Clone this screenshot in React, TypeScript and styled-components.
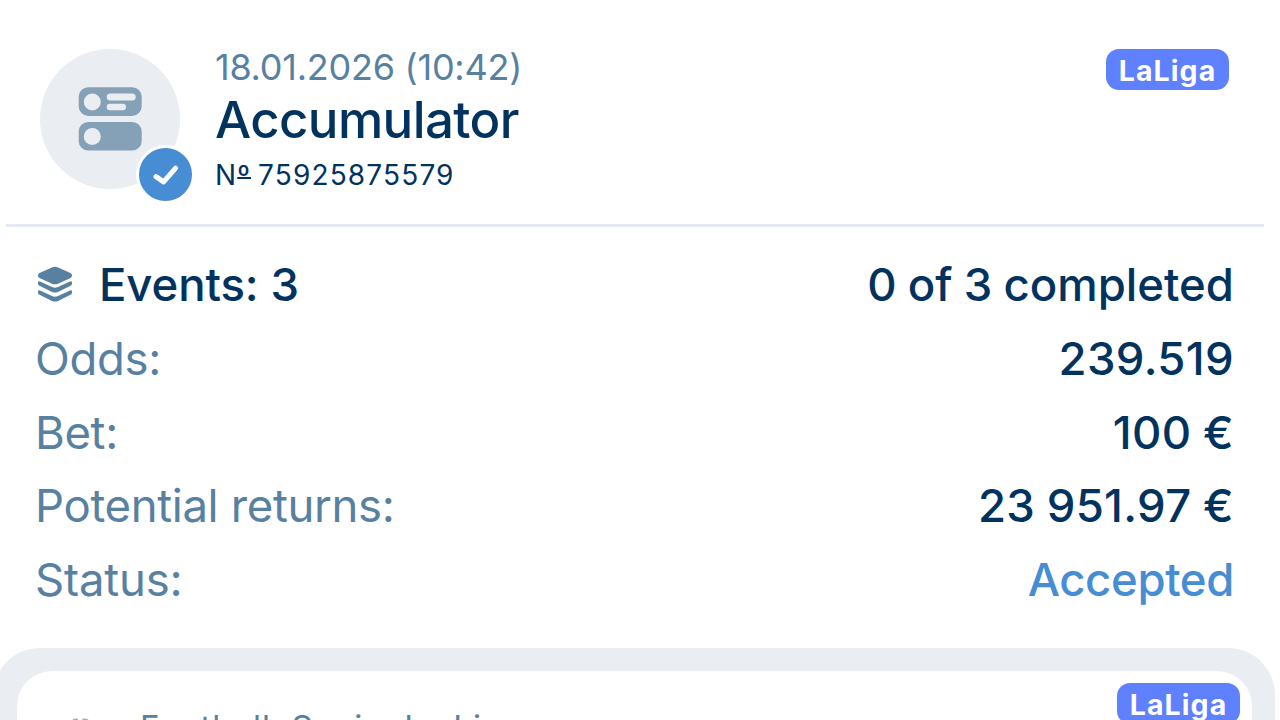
import React, { ReactElement, ReactNode } from 'react'
import styled, { createGlobalStyle } from 'styled-components'

const color = {
  navy: '#02335e',
  steel: '#5881a1',
  icon: '#84a1b8',
  blue: '#478dd3',
  brand: '#5f80ff',
  grey: '#eaedf2',
  line: '#e5e9f1',
  white: '#ffffff',
}

const GlobalStyle = createGlobalStyle`
  * {
    box-sizing: border-box;
  }

  body {
    margin: 0;
    height: 720px;
    overflow: hidden;
    background: ${color.white};
    font-family: Inter, 'Liberation Sans', sans-serif;
  }
`

const Page = styled.main`
  display: flex;
  flex-direction: column;
  width: 1280px;
  height: 720px;
  overflow: hidden;
`

const Header = styled.header`
  display: flex;
  flex: none;
  align-items: flex-start;
  height: 227px;
  margin: 0 16px 0 6px;
  padding: 49px 35px 0 34px;
  border-bottom: 3px solid ${color.line};
`

const Avatar = styled.div`
  position: relative;
  display: flex;
  align-items: center;
  justify-content: center;
  width: 140px;
  height: 140px;
  border-radius: 50%;
  background: ${color.grey};
`

const AcceptedMark = styled.div`
  position: absolute;
  right: -15px;
  bottom: -15px;
  display: flex;
  width: 59px;
  height: 59px;
  border: 3px solid ${color.white};
  border-radius: 50%;
  background: ${color.blue};
`

const Summary = styled.div`
  display: flex;
  flex: 1;
  flex-direction: column;
  padding-left: 35px;
  white-space: nowrap;
`

const DateLine = styled.span`
  color: ${color.steel};
  font-size: 36px;
  line-height: 37px;
  letter-spacing: -0.25px;
`

const Title = styled.h1`
  margin: 0;
  color: ${color.navy};
  font-size: 51px;
  font-weight: 500;
  line-height: 68px;
  letter-spacing: -0.6px;
`

const Serial = styled.span`
  color: ${color.navy};
  font-size: 28px;
  line-height: 43px;
  letter-spacing: 1.15px;
  word-spacing: -2px;
`

const Ordinal = styled.span`
  text-decoration: underline;
  text-decoration-thickness: 2px;
  text-underline-offset: -8px;
  text-decoration-skip-ink: none;
`

const Badge = styled.span`
  display: flex;
  align-items: center;
  justify-content: center;
  width: 123px;
  height: 41px;
  padding: 2px 0 0;
  border-radius: 13px;
  background: ${color.brand};
  color: ${color.white};
  font-size: 28.5px;
  font-weight: 700;
  line-height: 38px;
  letter-spacing: 1.1px;
`

const Details = styled.dl`
  display: flex;
  flex: none;
  flex-direction: column;
  height: 421px;
  margin: 0;
  padding: 21px 46px 0 35px;
`

const Row = styled.div`
  display: flex;
  justify-content: space-between;
  height: 73.8px;
  font-size: 45.5px;
  line-height: 74px;
  white-space: nowrap;
`

const Label = styled.dt<{ $strong?: boolean; $spacing?: number }>`
  display: flex;
  align-items: center;
  gap: 25px;
  color: ${({ $strong }) => ($strong ? color.navy : color.steel)};
  font-weight: ${({ $strong }) => ($strong ? 500 : 400)};
  letter-spacing: ${({ $spacing = -0.35 }) => $spacing}px;

  svg {
    margin-left: 1px;
  }
`

const Value = styled.dd<{ $accent?: boolean; $spacing?: number }>`
  margin: 0;
  color: ${({ $accent }) => ($accent ? color.blue : color.navy)};
  font-weight: 500;
  letter-spacing: ${({ $spacing = 0 }) => $spacing}px;
  word-spacing: -1px;
`

const EventsPanel = styled.section`
  flex: none;
  height: 220px;
  margin: 0 5px 0 -7px;
  padding: 23px 23px 0 24px;
  border-radius: 47px;
  background: ${color.grey};
`

const EventCard = styled.article`
  display: flex;
  align-items: flex-start;
  height: 180px;
  padding: 12px 12px 0 46px;
  border-radius: 35px;
  background: ${color.white};
`

const League = styled.div`
  display: flex;
  flex: 1;
  gap: 42px;
  padding-top: 24px;
  color: ${color.steel};
  font-size: 33px;
  line-height: 40px;
  letter-spacing: 0.9px;

  svg {
    margin-top: 10px;
  }
`

const CouponIcon = (): ReactElement => (
  <svg width="64" height="64" viewBox="0 0 64 64">
    <rect x="0.7" y="0.3" width="63" height="28.6" rx="9.5" fill={color.icon} />
    <rect x="0.7" y="35" width="63" height="28.6" rx="9.5" fill={color.icon} />
    <g fill={color.grey}>
      <circle cx="14.3" cy="15" r="8.5" />
      <circle cx="14.3" cy="49.6" r="8.5" />
      <rect x="28.7" y="6.6" width="29" height="7" rx="3.5" />
      <rect x="28.7" y="16.8" width="19.3" height="6.4" rx="3.2" />
    </g>
  </svg>
)

const CheckIcon = (): ReactElement => (
  <svg width="53" height="53" viewBox="0 0 53 53">
    <path
      d="M17 28.6L24.6 33.9L36.6 20.2"
      fill="none"
      stroke={color.white}
      strokeWidth="5"
      strokeLinecap="round"
      strokeLinejoin="round"
    />
  </svg>
)

const LayersIcon = (): ReactElement => (
  <svg width="38" height="38" viewBox="0 0 38 38" fill={color.steel}>
    <path d="M16.5 1.3Q19 0.2 21.5 1.3L34.5 7Q36 7.7 36 9.5Q36 11.3 34.5 12L22 17.7Q19 19 16 17.7L3.5 12Q2 11.3 2 9.5Q2 7.7 3.5 7Z" />
    <path d="M2 16.6Q2 14.8 4 15.6L16 21.1Q19 22.4 22 21.1L34 15.6Q36 14.8 36 16.6V17.8Q36 19.1 34.5 19.8L22 25.9Q19 27.3 16 25.9L3.5 19.8Q2 19.1 2 17.8Z" />
    <path d="M2 25.6Q2 23.8 4 24.6L16 30.1Q19 31.4 22 30.1L34 24.6Q36 23.8 36 25.6V26.8Q36 28.1 34.5 28.8L22 34.9Q19 36.3 16 34.9L3.5 28.8Q2 28.1 2 26.8Z" />
  </svg>
)

const FootballIcon = (): ReactElement => (
  <svg width="35" height="35" viewBox="0 0 35 35" fill="none" stroke="#a7abb0" strokeWidth="1.8">
    <path d="M10 3.4Q12.5 2.2 15 2.6M19.5 2.6Q22.5 2.2 25 3.4" />
    <path d="M6 7A15.5 15.5 0 1 0 29 7" />
    <path d="M17.5 10L25 15.5L22 24H13L10 15.5Z" fill="#a7abb0" />
  </svg>
)

interface DetailProps {
  label: string
  value: string
  icon?: ReactNode
  accent?: boolean
  labelSpacing?: number
  valueSpacing?: number
}

const Detail = ({ label, value, icon, accent, labelSpacing, valueSpacing }: DetailProps): ReactElement => (
  <Row>
    <Label $strong={!!icon} $spacing={labelSpacing}>
      {icon}
      {label}
    </Label>
    <Value $accent={accent} $spacing={valueSpacing}>
      {value}
    </Value>
  </Row>
)

const App = (): ReactElement => (
  <Page>
    <GlobalStyle />
    <Header>
      <Avatar>
        <CouponIcon />
        <AcceptedMark>
          <CheckIcon />
        </AcceptedMark>
      </Avatar>
      <Summary>
        <DateLine>18.01.2026 (10:42)</DateLine>
        <Title>Accumulator</Title>
        <Serial>
          N<Ordinal>º</Ordinal> 75925875579
        </Serial>
      </Summary>
      <Badge>LaLiga</Badge>
    </Header>
    <Details>
      <Detail icon={<LayersIcon />} label="Events: 3" value="0 of 3 completed" labelSpacing={-0.1} valueSpacing={0.02} />
      <Detail label="Odds:" value="239.519" valueSpacing={0.35} />
      <Detail label="Bet:" value="100 €" valueSpacing={0.4} />
      <Detail label="Potential returns:" value="23 951.97 €" valueSpacing={0.35} />
      <Detail label="Status:" value="Accepted" labelSpacing={-0.2} valueSpacing={-0.35} accent />
    </Details>
    <EventsPanel>
      <EventCard>
        <League>
          <FootballIcon />
          Football. Spain. La Liga
        </League>
        <Badge>LaLiga</Badge>
      </EventCard>
    </EventsPanel>
  </Page>
)

export default App
